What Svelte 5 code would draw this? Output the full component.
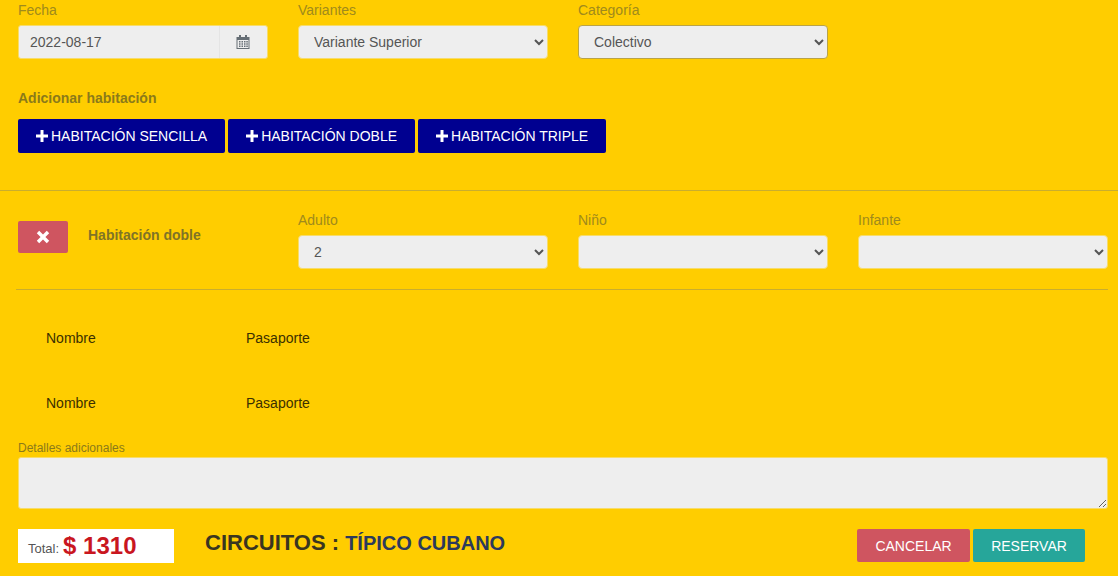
<script>
  let rooms = ['HABITACIÓN SENCILLA', 'HABITACIÓN DOBLE', 'HABITACIÓN TRIPLE'];
  let guests = [1, 2];
</script>

<div class="page">
  <div class="fields">
    <div class="field">
      <label for="fecha">Fecha</label>
      <div class="date">
        <input id="fecha" value="2022-08-17" />
        <span class="addon">
          <svg width="14" height="14" viewBox="0 0 14 14" fill="#666e75">
            <path d="M3 0h2v2h4V0h2v2h2.500v12H.5V2H3zM1.500 5v8h11V5zM3 6h1.500v1.500H3zM5.500 6H7v1.500H5.500zM8 6h1.500v1.500H8zM10.300 6h1.500v1.500h-1.500zM3 8.300h1.500v1.500H3zM5.500 8.300H7v1.500H5.500zM8 8.300h1.500v1.500H8zM10.300 8.300h1.500v1.500h-1.500zM3 10.600h1.500v1.500H3zM5.500 10.600H7v1.500H5.500zM8 10.600h1.500v1.500H8zM10.300 10.600h1.500v1.500h-1.500z" fill-rule="evenodd"/>
          </svg>
        </span>
      </div>
    </div>
    <div class="field">
      <label for="variantes">Variantes</label>
      <select id="variantes"><option>Variante Superior</option></select>
    </div>
    <div class="field">
      <label for="categoria">Categoría</label>
      <select id="categoria" class="focused"><option>Colectivo</option></select>
    </div>
  </div>

  <div class="add-title">Adicionar habitación</div>
  <div class="add-buttons">
    {#each rooms as room}
      <button class="btn-add">
        <svg width="12" height="12" viewBox="0 0 12 12" fill="#fff"><path d="M4.500 0h3v4.500H12v3H7.500V12h-3V7.500H0v-3h4.500z"/></svg>
        {room}
      </button>
    {/each}
  </div>

  <hr class="full" />

  <div class="room">
    <div class="room-head">
      <button class="btn-remove" aria-label="Quitar">
        <svg width="14" height="14" viewBox="0 0 14 14" fill="#fff"><path d="M3.200.8 7 4.600 10.800.8l2.400 2.400L9.400 7l3.800 3.800-2.400 2.400L7 9.400l-3.800 3.800-2.400-2.400L4.600 7 .8 3.200z"/></svg>
      </button>
      <strong>Habitación doble</strong>
    </div>
    <div class="field">
      <label for="adulto">Adulto</label>
      <select id="adulto"><option>2</option></select>
    </div>
    <div class="field">
      <label for="nino">Niño</label>
      <select id="nino"><option></option></select>
    </div>
    <div class="field">
      <label for="infante">Infante</label>
      <select id="infante"><option></option></select>
    </div>
  </div>

  <hr class="inner" />

  <div class="guests">
    {#each guests as g}
      <div class="guest"><span>Nombre</span><span>Pasaporte</span></div>
    {/each}
  </div>

  <label class="details-label" for="detalles">Detalles adicionales</label>
  <textarea id="detalles"></textarea>

  <div class="footer">
    <div class="total"><small>Total:</small> <b>$ 1310</b></div>
    <h4>CIRCUITOS : <span>TÍPICO CUBANO</span></h4>
    <div class="actions">
      <button class="btn-cancel">CANCELAR</button>
      <button class="btn-save">RESERVAR</button>
    </div>
  </div>
</div>

<style>
  :global(body) {
    background: #ffcd00;
    font-family: "Liberation Sans", Arial, sans-serif;
  }

  .page {
    height: 576px;
    overflow: hidden;
    box-sizing: border-box;
    padding-top: 2px;
  }

  .fields, .room {
    display: grid;
    grid-template-columns: repeat(4, 250px);
    column-gap: 30px;
    padding-left: 18px;
  }

  .field {
    display: flex;
    flex-direction: column;
  }

  label {
    font-size: 14px;
    line-height: 16px;
    color: #a08a1c;
    margin-bottom: 7px;
  }

  select, .date {
    height: 34px;
    box-sizing: border-box;
    width: 250px;
    background-color: #eee;
    border: 1px solid #f7dc6a;
    border-radius: 4px;
    font: 14px "Liberation Sans", Arial, sans-serif;
    color: #555;
    padding: 0 0 0 11px;
    outline: none;
  }

  select.focused {
    border-color: #b9a347;
  }

  .date {
    display: flex;
    padding: 0;
    border-radius: 3px;
    overflow: hidden;
  }

  .date input {
    flex: 1;
    min-width: 0;
    border: 0;
    background: transparent;
    padding: 0 11px;
    font: 14px "Liberation Sans", Arial, sans-serif;
    color: #555;
    outline: none;
  }

  .addon {
    width: 48px;
    display: flex;
    align-items: center;
    justify-content: center;
    border-left: 1px solid #e4e4e4;
    padding-right: 2px;
    box-sizing: border-box;
  }

  .add-title {
    margin-top: 32px;
    padding-left: 18px;
    font-size: 14px;
    line-height: 14px;
    font-weight: bold;
    color: #8b7a1a;
  }

  .add-buttons {
    display: flex;
    gap: 3px;
    margin-top: 14px;
    padding-left: 18px;
  }

  button {
    font-family: "Liberation Sans", Arial, sans-serif;
    border: 0;
    border-radius: 2px;
    cursor: pointer;
  }

  .btn-add {
    height: 34px;
    padding: 0 18px;
    background: #000090;
    color: #fff;
    font-size: 14px;
    display: flex;
    align-items: center;
    gap: 3px;
    white-space: nowrap;
  }

  hr {
    border: 0;
    height: 1px;
    background: #c9ad2e;
    margin: 0;
  }

  hr.full {
    margin-top: 37px;
  }

  .room {
    margin-top: 21px;
  }

  .room-head {
    display: flex;
    align-items: flex-start;
    gap: 20px;
    padding-top: 9px;
  }

  .room-head strong {
    font-size: 14px;
    line-height: 14px;
    padding-top: 7px;
    color: #7f7427;
    white-space: nowrap;
  }

  .btn-remove {
    width: 50px;
    height: 32px;
    flex: none;
    background: #cf5560;
    display: flex;
    align-items: center;
    justify-content: center;
  }

  hr.inner {
    margin: 20px 10px 0 16px;
  }

  .guests {
    padding: 40px 0 0 46px;
    display: flex;
    flex-direction: column;
    gap: 49px;
  }

  .guest {
    display: flex;
    font-size: 14px;
    line-height: 16px;
    color: #3b3000;
  }

  .guest span:first-child {
    width: 200px;
  }

  .details-label {
    display: block;
    margin: 30px 0 2px 18px;
    font-size: 12px;
    line-height: 14px;
    color: #8b7a1a;
  }

  textarea {
    display: block;
    box-sizing: border-box;
    width: 1090px;
    height: 52px;
    margin-left: 18px;
    background: #eee;
    border: 1px solid #f7dc6a;
    border-radius: 3px;
    outline: none;
  }

  .footer {
    display: flex;
    align-items: center;
    margin-top: 20px;
    padding-left: 18px;
  }

  .total {
    width: 156px;
    height: 34px;
    box-sizing: border-box;
    padding-left: 10px;
    background: #fff;
    display: flex;
    align-items: center;
    gap: 4px;
  }

  .total small {
    font-size: 13px;
    color: #555;
    padding-top: 4px;
  }

  .total b {
    font-size: 24px;
    line-height: 24px;
    color: #c9161f;
  }

  h4 {
    margin: 0 0 7px 31px;
    font-size: 22px;
    line-height: 26px;
    font-weight: bold;
    color: #3a3520;
  }

  h4 span {
    font-size: 20px;
    color: #2c3a5c;
  }

  .actions {
    align-self: flex-start;
    margin-left: auto;
    margin-right: 33px;
    display: flex;
    gap: 3px;
  }

  .actions button {
    height: 33px;
    color: #fff;
    font-size: 14px;
  }

  .btn-cancel {
    width: 113px;
    background: #cf5560;
  }

  .btn-save {
    width: 112px;
    background: #26a69a;
  }
</style>
